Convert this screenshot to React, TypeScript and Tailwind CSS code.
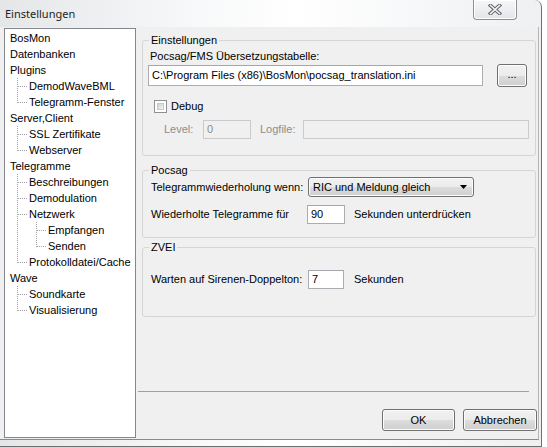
import React from 'react';

type Guide = 'pipe' | 'tee' | 'end';

interface TreeRow {
  label: string;
  guides: Guide[];
}

// settings tree, guides describe the dotted connector cells before each label
const TREE: TreeRow[] = [
  { label: 'BosMon', guides: [] },
  { label: 'Datenbanken', guides: [] },
  { label: 'Plugins', guides: [] },
  { label: 'DemodWaveBML', guides: ['tee'] },
  { label: 'Telegramm-Fenster', guides: ['end'] },
  { label: 'Server,Client', guides: [] },
  { label: 'SSL Zertifikate', guides: ['tee'] },
  { label: 'Webserver', guides: ['end'] },
  { label: 'Telegramme', guides: [] },
  { label: 'Beschreibungen', guides: ['tee'] },
  { label: 'Demodulation', guides: ['tee'] },
  { label: 'Netzwerk', guides: ['tee'] },
  { label: 'Empfangen', guides: ['pipe', 'tee'] },
  { label: 'Senden', guides: ['pipe', 'end'] },
  { label: 'Protokolldatei/Cache', guides: ['end'] },
  { label: 'Wave', guides: [] },
  { label: 'Soundkarte', guides: ['tee'] },
  { label: 'Visualisierung', guides: ['end'] },
];

const GuideCell = ({ kind }: { kind: Guide }) => (
  <svg width="19" height="16" className="shrink-0" shapeRendering="crispEdges">
    <line x1="7.5" y1="0" x2="7.5" y2={kind === 'end' ? 9 : 16} stroke="#a0a0a0" strokeDasharray="1 1" />
    {kind !== 'pipe' && (
      <line x1="8" y1="8.5" x2="18" y2="8.5" stroke="#a0a0a0" strokeDasharray="1 1" />
    )}
  </svg>
);

const aeroFace =
  'rounded-[3px] border border-[#707070] bg-[linear-gradient(#f2f2f2_0%,#ebebeb_50%,#dddddd_50%,#cfcfcf_100%)] shadow-[inset_0_0_0_1px_#fcfcfc] flex items-center text-black';

const textBox = 'border border-[#abadb3] border-t-[#a3a6ad] bg-white flex items-center pl-[3px]';

const GroupBox = ({
  title,
  className,
  children,
}: {
  title: string;
  className: string;
  children: React.ReactNode;
}) => (
  <fieldset className={`ml-[6px] w-[394px] border border-[#d5d5d5] rounded-[3px] ${className}`}>
    <legend className="ml-[6px] px-[2px] leading-[13px]">{title}</legend>
    {children}
  </fieldset>
);

export default function App() {
  return (
    <div className="w-[547px] h-[447px] bg-white overflow-hidden font-['Liberation_Sans',Arial,sans-serif] text-[11px] text-black">
      <div className="w-[542px] h-[447px] flex flex-col border-r border-b border-[#6f6f6f] rounded-tr-[7px] bg-[linear-gradient(90deg,#e4e6e8_0%,#f7f8f9_35%,#ffffff_55%,#eef0f2_100%)]">
        {/* title bar */}
        <div className="h-[27px] flex justify-between shrink-0">
          <span className="pl-[5px] pt-[6px] font-['Noto_Sans',sans-serif] text-[11px] leading-[16px] text-[#1e1e1e]">
            Einstellungen
          </span>
          <div className="mr-[24px] w-[44px] h-[20px] border border-t-0 border-[#8d9095] rounded-b-[4px] bg-[linear-gradient(#f6f7f8,#e3e6e9)] shadow-[inset_0_0_0_1px_#ffffff] flex items-center justify-center">
            <svg width="14" height="11" viewBox="0 0 14 11">
              <path d="M2.5 1.5 L11.5 9.5 M11.5 1.5 L2.5 9.5" stroke="#5f6368" strokeWidth="3.6" strokeLinecap="square" />
              <path d="M2.5 1.5 L11.5 9.5 M11.5 1.5 L2.5 9.5" stroke="#f2f3f4" strokeWidth="1.6" strokeLinecap="square" />
            </svg>
          </div>
        </div>

        {/* client area */}
        <div className="h-[413px] mr-[2px] flex bg-[#f0f0f0] border-r border-b border-r-[#b5b5b5] border-b-[#8a8a8a] shrink-0">
          <div className="ml-[4px] mt-[1px] w-[132px] h-[410px] border border-[#828790] bg-white pt-[1px] pl-[5px]">
            {TREE.map((row) => (
              <div key={row.label} className="flex h-[16px] items-center">
                {row.guides.map((g, i) => (
                  <GuideCell key={i} kind={g} />
                ))}
                <span className="leading-[16px] whitespace-nowrap">{row.label}</span>
              </div>
            ))}
          </div>

          <div className="flex-1 flex flex-col">
            <GroupBox title="Einstellungen" className="mt-[7px] h-[122px]">
              <div className="pl-[5px]">
                <div className="mt-[3px] ml-[2px] leading-[13px]">Pocsag/FMS Übersetzungstabelle:</div>
                <div className="mt-[1px] flex items-center h-[23px]">
                  <div className={`${textBox} w-[335px] h-[21px] pl-[1px]`}>
                    C:\Program Files (x86)\BosMon\pocsag_translation.ini
                  </div>
                  <button className={`${aeroFace} justify-center ml-[14px] w-[30px] h-[23px] pb-[3px] text-[#404040]`}>
                    ...
                  </button>
                </div>
                <div className="mt-[13px] flex items-center h-[13px]">
                  <div className="ml-[6px] w-[13px] h-[13px] border border-[#8e8f8f] p-[2px] bg-white">
                    <div className="w-full h-full bg-[linear-gradient(135deg,#cbcfd5,#f6f6f6)] border border-[#c5c8cc]" />
                  </div>
                  <span className="ml-[4px] leading-[13px]">Debug</span>
                </div>
                <div className="mt-[7px] flex items-center h-[19px] text-[#8d8d8d]">
                  <span className="ml-[16px] w-[39px]">Level:</span>
                  <div className="w-[48px] h-[19px] border border-[#c9cacd] bg-[#f0f0f0] flex items-center pl-[3px] text-[#8d8d8d]">
                    0
                  </div>
                  <span className="ml-[9px] w-[43px]">Logfile:</span>
                  <div className="w-[226px] h-[19px] border border-[#c9cacd] bg-[#f0f0f0]" />
                </div>
              </div>
            </GroupBox>

            <GroupBox title="Pocsag" className="mt-[8px] h-[74px]">
              <div className="pl-[8px]">
                <div className="flex items-center h-[20px]">
                  <span className="w-[157px]">Telegrammwiederholung wenn:</span>
                  <div className={`${aeroFace} justify-between w-[166px] h-[20px] pl-[4px] pr-[6px]`}>
                    <span>RIC und Meldung gleich</span>
                    <svg width="7" height="4" viewBox="0 0 7 4">
                      <path d="M0 0 H7 L3.5 4 Z" fill="#000" />
                    </svg>
                  </div>
                </div>
                <div className="mt-[8px] flex items-center h-[19px]">
                  <span className="w-[156px]">Wiederholte Telegramme für</span>
                  <div className={`${textBox} w-[38px] h-[19px]`}>90</div>
                  <span className="ml-[9px]">Sekunden unterdrücken</span>
                </div>
              </div>
            </GroupBox>

            <GroupBox title="ZVEI" className="mt-[3px] h-[76px]">
              <div className="pl-[8px]">
                <div className="mt-[16px] flex items-center h-[19px]">
                  <span className="w-[157px]">Warten auf Sirenen-Doppelton:</span>
                  <div className={`${textBox} w-[36px] h-[19px]`}>7</div>
                  <span className="ml-[10px]">Sekunden</span>
                </div>
              </div>
            </GroupBox>

            <div className="mt-[74px] ml-[2px] w-[391px] h-px bg-[#a0a0a0]" />

            <div className="mt-[17px] flex justify-end gap-[8px] pr-[1px]">
              <button
                className={`${aeroFace} justify-center w-[73px] h-[22px] border-[#3c7fb1] shadow-[inset_0_0_0_1px_#e6f3fb]`}
              >
                OK
              </button>
              <button className={`${aeroFace} justify-center w-[74px] h-[22px]`}>Abbrechen</button>
            </div>
          </div>
        </div>
      </div>
    </div>
  );
}
